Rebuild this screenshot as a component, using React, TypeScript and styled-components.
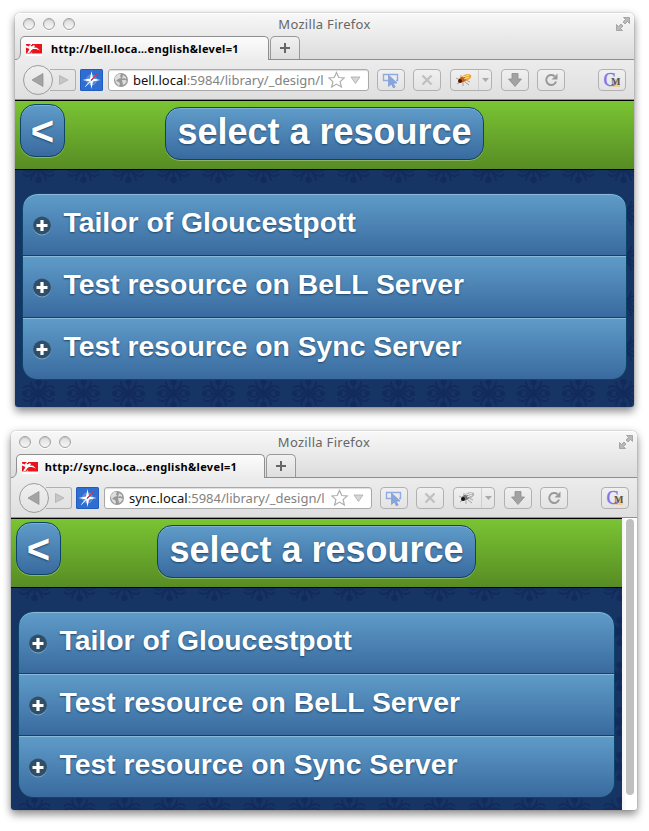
import React from "react";
import styled, { createGlobalStyle, css } from "styled-components";

const branch = `<path d="M2 2.500C4 5 7.500 7 7.500 11.500M3.500 1.500C6 5.500 9 7.500 11 7.500S14.500 7 15 5.500M6 1C8 3.500 10 4 12.500 3"/>`;

const ornament = encodeURIComponent(`<svg xmlns="http://www.w3.org/2000/svg" width="45" height="45" viewBox="-22.5 -22.5 45 45">
<g fill="none" stroke="#122a5c" stroke-width="1.800" stroke-linecap="round">
<g>${branch}</g><g transform="scale(-1 1)">${branch}</g><g transform="scale(1 -1)">${branch}</g><g transform="scale(-1 -1)">${branch}</g>
<path d="M0-10V10M-7 0H7"/></g>
<g fill="#122a5c"><ellipse rx="3" ry="4"/><circle cy="11.500" r="3.200"/><circle cy="-11.500" r="3.200"/><circle cx="14" r="2.800"/><circle cx="-14" r="2.800"/></g></svg>`);

const GlobalStyle = createGlobalStyle`
  * { box-sizing: border-box; }
  body { margin: 0; background: #fff; }
`;

const Desktop = styled.main`
  width: 649px;
  height: 831px;
  overflow: hidden;
  display: flex;
  flex-direction: column;
  gap: 24px;
  padding-top: 13px;
`;

const Window = styled.section<{ $left: number; $width: number; $height: number }>`
  flex: none;
  margin-left: ${(p) => p.$left}px;
  width: ${(p) => p.$width}px;
  height: ${(p) => p.$height}px;
  display: flex;
  flex-direction: column;
  border-radius: 5px 5px 3px 3px;
  box-shadow: 0 0 1px rgba(0, 0, 0, 0.6), 0 5px 9px rgba(0, 0, 0, 0.36), 0 1px 8px rgba(0, 0, 0, 0.16);
`;

const TitleArea = styled.header`
  height: 47px;
  flex: none;
  display: flex;
  flex-direction: column;
  justify-content: space-between;
  background: linear-gradient(#f8f8f8, #dcdcdc);
  border-bottom: 1px solid #8d8d8d;
  border-radius: 5px 5px 0 0;
  box-shadow: inset 0 1px #fff;
`;

const TitleBar = styled.div`
  height: 23px;
  display: grid;
  grid-template-columns: 80px 1fr 80px;
  align-items: center;
`;

const Lights = styled.div`
  display: flex;
  gap: 8px;
  padding: 0 0 1px 8px;
`;

const Light = styled.i`
  width: 12px;
  height: 12px;
  border-radius: 50%;
  border: 1px solid #a2a2a2;
  background: linear-gradient(#dcdcdc, #f6f6f6);
  box-shadow: inset 0 1px 1px #c4c4c4, 0 1px #fff;
`;

const WindowTitle = styled.div`
  text-align: center;
  font: 13px/21px "Noto Sans", sans-serif;
  letter-spacing: 0.3px;
  color: #666;
`;

const Expand = styled.svg`
  justify-self: end;
  margin: 0 3px 1px 0;
`;

const Tabs = styled.div`
  height: 24px;
  display: flex;
  align-items: flex-start;
  gap: 1px;
  margin-bottom: -1px;
`;

const Tab = styled.div`
  position: relative;
  margin-left: 5px;
  width: 249px;
  height: 24px;
  padding-left: 5px;
  display: flex;
  align-items: center;
  border: 1px solid #8f8f8f;
  border-bottom: 0;
  border-radius: 5px 5px 0 0;
  background: linear-gradient(#fcfcfc, #ececec);
`;

const TabLabel = styled.span`
  flex: 1;
  margin-right: 20px;
  text-align: center;
  white-space: nowrap;
  font: bold 11px/20px "Noto Sans", sans-serif;
  letter-spacing: 0.33px;
  color: #000;
`;

const NewTab = styled.div`
  width: 30px;
  height: 23px;
  display: grid;
  place-items: center;
  border: 1px solid #999;
  border-bottom: 0;
  border-radius: 5px 5px 0 0;
  background: linear-gradient(#f1f1f1, #dedede);
`;

const Toolbar = styled.div`
  height: 40px;
  flex: none;
  display: flex;
  align-items: center;
  padding: 0 8px;
  background: linear-gradient(#ececec, #dfdfdf);
  border-bottom: 1px solid #929292;
`;

const BackCircle = styled.div`
  position: relative;
  flex: none;
  width: 30px;
  height: 30px;
  display: grid;
  place-items: center;
  border: 1px solid #9d9d9d;
  border-radius: 50%;
  background: linear-gradient(#f0f0f0, #e2e2e2);
`;

const Forward = styled.div`
  flex: none;
  width: 26px;
  height: 22px;
  margin-left: -3px;
  padding-left: 9px;
  display: flex;
  align-items: center;
  border: 1px solid #b0b0b0;
  border-left: 0;
  border-radius: 0 3px 3px 0;
`;

const Compass = styled.svg`
  flex: none;
  margin: 0 5px 0 4px;
`;

const AddressBar = styled.div`
  flex: 1;
  min-width: 0;
  height: 22px;
  display: flex;
  align-items: center;
  padding: 0 4px 0 5px;
  border: 1px solid #a9a9a9;
  border-radius: 3px;
  background: #fff;
  box-shadow: inset 0 1px 1px #ddd;
`;

const Address = styled.div`
  flex: 1;
  min-width: 0;
  margin: 0 2px 0 5px;
  white-space: nowrap;
  font: 13px/20px "Noto Sans", sans-serif;
  color: #828282;
  b { font-weight: normal; color: #111; }
`;

const Tools = styled.div`
  display: flex;
  gap: 8px;
  margin-left: 8px;
`;

const ToolButton = styled.div<{ $wide?: boolean; $apart?: boolean }>`
  width: ${(p) => (p.$wide ? 42 : 28)}px;
  height: 22px;
  margin: 0 ${(p) => (p.$wide ? 1 : 0)}px 0 ${(p) => (p.$apart ? 25 : p.$wide ? 1 : 0)}px;
  display: flex;
  align-items: center;
  justify-content: center;
  border: 1px solid #b1b1b1;
  border-radius: 4px;
  background: linear-gradient(#f0f0f0, #e3e3e3);
`;

const DropPart = styled.span`
  width: 13px;
  height: 20px;
  display: grid;
  place-items: center;
  border-left: 1px solid #cfcfcf;
`;

const Monkey = styled.svg`
  overflow: visible;
`;

const Viewport = styled.div`
  flex: 1;
  min-height: 0;
  display: flex;
  overflow: hidden;
  border-radius: 0 0 3px 3px;
`;

const Page = styled.div`
  flex: 1;
  background: #163464 url("data:image/svg+xml,${ornament}") 0.5px 0.5px;
`;

const PageHeader = styled.div`
  height: 70px;
  display: grid;
  grid-template-columns: 50px 1fr 50px;
  align-items: start;
  border: solid #000;
  border-width: 1px 0;
  background: linear-gradient(#7ac433, #578c24);
`;

const glossy = css`
  border: 1px solid #0b4567;
  background: linear-gradient(#5f9cc9, #396a9f);
  color: #fff;
  font-family: "Liberation Sans", Arial, sans-serif;
  font-weight: bold;
  text-shadow: 0 1px 2px #204567;
`;

const PageButton = styled.button<{ $title?: boolean }>`
  ${glossy}
  justify-self: ${(p) => (p.$title ? "center" : "end")};
  width: ${(p) => (p.$title ? 319 : 45)}px;
  height: 53px;
  margin-top: ${(p) => (p.$title ? 6 : 3)}px;
  padding: ${(p) => (p.$title ? "0 0 4px" : "0")};
  border-radius: 15px;
  font-size: ${(p) => (p.$title ? 36 : 40)}px;
  line-height: 48px;
  white-space: nowrap;
  box-shadow: inset 0 1px #80b1d5, 0 1px rgba(255, 255, 255, 0.3);
`;

const ResourceList = styled.ul`
  list-style: none;
  margin: 23px 7px 0;
  padding: 0;
  border: 1px solid #0b4567;
  border-top: 0;
  border-radius: 15px;
  overflow: hidden;
`;

const Resource = styled.li`
  ${glossy}
  height: 62px;
  border-width: 1px 0 0;
  display: flex;
  align-items: center;
  padding: 0 0 4px 9.5px;
  font-size: 28.35px;
  white-space: nowrap;
  box-shadow: inset 0 1px #8bb9da;
  &:first-child { border-radius: 15px 15px 0 0; }
`;

const PlusBadge = styled.svg`
  margin: 6px 12px 0 0;
`;

const ScrollTrack = styled.div`
  width: 15px;
  padding: 1px 0 0 4px;
  background: linear-gradient(90deg, #f2f2f2, #fff 30%);
`;

const ScrollThumb = styled.div`
  width: 8px;
  height: 276px;
  border-radius: 4px;
  background: #bfbfbf;
`;

const TabFoot = styled.svg`
  position: absolute;
  left: -6px;
  bottom: 0;
`;

const Favicon = () => (
  <svg width="16" height="14" viewBox="0 0 16 14">
    <path fill="#fff" d="M0 0h16v14H0z" />
    <path fill="#e8141c" d="M0 2h4l1 1h1V2h10v9.500H5.500l1-2-2 2H0z" />
    <path fill="#fff" d="M0 3.500l3 1 1-2 1.500 2L8 3l1 1.200-1 1.300 3 .3 3 2.700-4-1.500-3 0-2 1.500-1 2-3 1L3.500 7 0 5.500z" />
  </svg>
);

const Fly = ({ active }: { active: boolean }) => (
  <g>
    <g fill="none" stroke={active ? "#8d7d6c" : "#888"} strokeWidth=".7">
      <path d="M4 7L0 5M4 9L1 11M7 10v3M9 9l4 3M10 7l4 2M5 5V2" />
    </g>
    <ellipse cx="10.500" cy="4.500" rx="5" ry="3" transform="rotate(-20 10 4.500)" fill={active ? "#f2a32a" : "#b4b4b4"} />
    <ellipse cx="6.500" cy="6.800" rx="3.500" ry="2.700" transform="rotate(-20 6 7)" fill={active ? "#c45d15" : "#777"} />
    <ellipse cx="4" cy="8" rx="2" ry="2" fill={active ? "#48180a" : "#111"} />
    <path d="M7 4l6-2M8 6l5-2" stroke={active ? "#ffe08a" : "#eee"} strokeWidth="1" />
  </g>
);

const Globe = () => (
  <svg width="14" height="14" viewBox="0 0 14 14">
    <circle cx="7" cy="7" r="7" fill="#989898" />
    <path fill="#e9e9e9" d="M1 4l3-3 3 0-1 2 1 2-3 1-2 2 3 1 1 2-1 2-3-3-1-3zM9 2l3 2v2l-2-1-2 1zM8 7l3 0 2 1-2 3-2 1z" opacity=".85" />
  </svg>
);

interface BrowserProps {
  host: string;
  tab: string;
  left: number;
  width: number;
  height: number;
  scroll?: boolean;
}

const resources = ["Tailor of Gloucestpott", "Test resource on BeLL Server", "Test resource on Sync Server"];

const Browser = ({ host, tab, left, width, height, scroll = false }: BrowserProps) => (
  <Window $left={left} $width={width} $height={height}>
    <TitleArea>
      <TitleBar>
        <Lights><Light /><Light /><Light /></Lights>
        <WindowTitle>Mozilla Firefox</WindowTitle>
        <Expand width="16" height="16" viewBox="0 0 16 16">
          <path d="M8.500 1.500h6v6l-2-2-2.500 2.500-2-2L10.500 3.500zM1.500 8.500l2 2L6 8l2 2-2.500 2.500 2 2h-6z" fill="#b9b9b9" stroke="#999" strokeWidth=".8" />
        </Expand>
      </TitleBar>
      <Tabs>
        <Tab>
          <TabFoot width="7" height="9" viewBox="0 0 7 9">
            <path d="M0 8.500C4 8.500 5.500 6 5.500 0H7v9H0z" fill="#ececec" />
            <path d="M0 8.500C4 8.500 5.500 6 5.500 0" fill="none" stroke="#8f8f8f" />
          </TabFoot>
          <Favicon />
          <TabLabel>{tab}</TabLabel>
        </Tab>
        <NewTab>
          <svg width="10" height="10" viewBox="0 0 10 10"><path d="M5 0v10M0 5h10" stroke="#666" strokeWidth="2" /></svg>
        </NewTab>
      </Tabs>
    </TitleArea>
    <Toolbar>
      <BackCircle>
        <svg width="14" height="14" viewBox="0 0 14 14"><path d="M1 7l11-6.500v13z" fill="#a3a3a3" stroke="#8c8c8c" strokeWidth=".7" /></svg>
      </BackCircle>
      <Forward>
        <svg width="10" height="10" viewBox="0 0 10 10"><path d="M.5.5v9L9 5z" fill="#c6c6c6" stroke="#aaa" strokeWidth=".7" /></svg>
      </Forward>
      <Compass width="23" height="22" viewBox="0 0 23 22">
        <rect width="23" height="22" rx="1.500" fill="#1f5cc0" />
        <rect x="1" y="1" width="21" height="20" fill="#2f6dd0" />
        <circle cx="11.500" cy="11" r="5" fill="#4d86df" stroke="#6b9be6" />
        <path d="M11.500 2l1.500 7.500 7.500 1.500-7.500 1.500-1.500 7.500-1.500-7.500L2.500 11l7.500-1.500z" fill="#fff" />
        <path d="M17.500 5l-6 6.500-.5-.5z" fill="#e8332c" stroke="#e8332c" />
        <path d="M5.500 17.500l5-6 .5.500z" fill="#dce7f7" stroke="#dce7f7" />
      </Compass>
      <AddressBar>
        <Globe />
        <Address><b>{host}</b>:5984/library/_design/l</Address>
        <svg width="36" height="18" viewBox="0 0 36 18">
          <path d="M8.500 1.500l2.300 5 5.400.5-4.100 3.600 1.300 5.400-4.900-2.900-4.900 2.900 1.300-5.400L.8 7l5.400-.5z" fill="#fff" stroke="#adadad" strokeWidth="1.200" />
          <path d="M23 6h9l-4.500 6.500z" fill="#d6d6d6" stroke="#aaa" strokeWidth=".8" />
        </svg>
      </AddressBar>
      <Tools>
        <ToolButton>
          <svg width="18" height="16" viewBox="0 0 18 16">
            <path d="M6 8.500H1.500v-6h14v6H14" fill="none" stroke="#8fabe4" strokeWidth="1.400" />
            <path d="M6.500 3l8.500 8-3.800.2 2 3.800-1.800 1-2-4-2.900 2.500z" fill="#87a5df" stroke="#7593cc" strokeWidth=".6" />
          </svg>
        </ToolButton>
        <ToolButton>
          <svg width="12" height="12" viewBox="0 0 12 12"><path d="M1.500 1.500l9 9M10.500 1.500l-9 9" stroke="#c0c0c0" strokeWidth="2.300" /></svg>
        </ToolButton>
        <ToolButton $wide>
          <svg width="27" height="14" viewBox="-5 0 27 14"><Fly active={!scroll} /></svg>
          <DropPart><svg width="7" height="4" viewBox="0 0 7 4"><path d="M0 0h7L3.500 4z" fill="#aaa" /></svg></DropPart>
        </ToolButton>
        <ToolButton>
          <svg width="14" height="14" viewBox="0 0 14 14"><path d="M4 .5h6V6h3.500L7 13.500.5 6H4z" fill="#a2a2a2" stroke="#8e8e8e" strokeWidth=".8" /></svg>
        </ToolButton>
        <ToolButton>
          <svg width="14" height="14" viewBox="0 0 14 14"><path d="M10.500 3.200A5 5 0 1 0 12 8.500" fill="none" stroke="#999" strokeWidth="2" /><path d="M13.500.5v6h-6z" fill="#999" /></svg>
        </ToolButton>
        <ToolButton $apart>
          <Monkey width="18" height="16" viewBox="0 0 18 16">
            <path d="M12 7h5v8H9v-2z" fill="#f0cf9d" />
            <text x="0.500" y="14" fontFamily="Liberation Serif, serif" fontSize="18" fill="#8072eb" stroke="#8072eb" strokeWidth=".4">C</text>
            <text x="8" y="13" fontFamily="Liberation Serif, serif" fontSize="10" fontWeight="bold" fill="#555">M</text>
          </Monkey>
        </ToolButton>
      </Tools>
    </Toolbar>
    <Viewport>
      <Page>
        <PageHeader>
          <PageButton>&lt;</PageButton>
          <PageButton $title>select a resource</PageButton>
        </PageHeader>
        <ResourceList>
          {resources.map((name) => (
            <Resource key={name}>
              <PlusBadge width="19" height="20" viewBox="0 0 19 20">
                <circle cx="9" cy="10.500" r="9" fill="#7ba8c9" />
                <circle cx="9" cy="9.500" r="9" fill="#2f4f69" />
                <path d="M9 4v11M3.500 9.500h11" stroke="#fff" strokeWidth="3.200" />
              </PlusBadge>
              {name}
            </Resource>
          ))}
        </ResourceList>
      </Page>
      {scroll && <ScrollTrack><ScrollThumb /></ScrollTrack>}
    </Viewport>
  </Window>
);

export default function App() {
  return (
    <>
      <GlobalStyle />
      <Desktop>
        <Browser host="bell.local" tab="http://bell.loca…english&level=1" left={15} width={619} height={394} />
        <Browser host="sync.local" tab="http://sync.loca…english&level=1" left={11} width={626} height={379} scroll />
      </Desktop>
    </>
  );
}
